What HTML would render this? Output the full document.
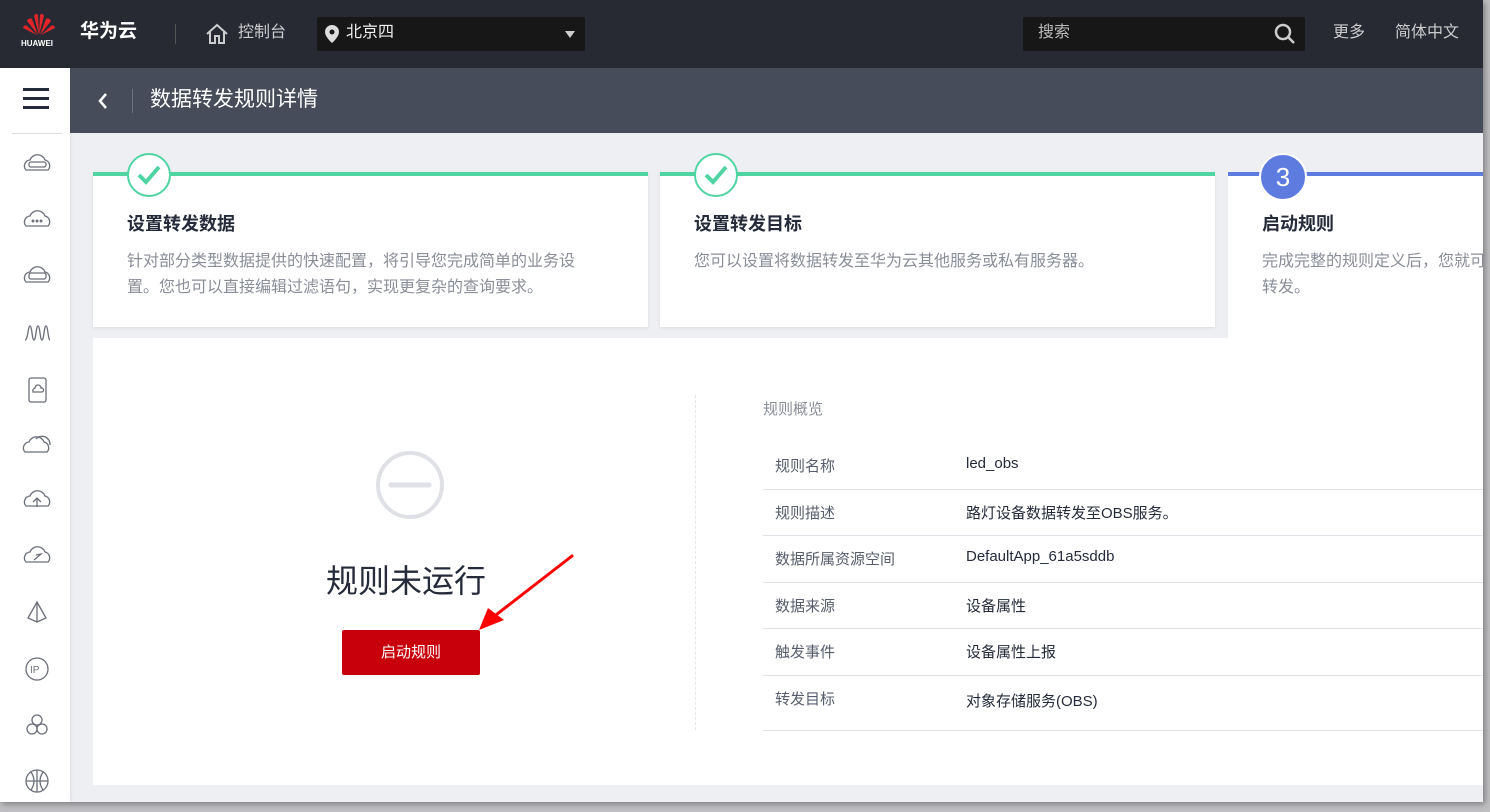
<!DOCTYPE html><html><head><meta charset="utf-8"><style>
*{margin:0;padding:0;box-sizing:border-box}
html,body{width:1490px;height:812px;overflow:hidden}
body{background:#bfbfc2;font-family:"Liberation Sans","Noto Sans CJK SC",sans-serif;position:relative;line-height:1.4}
.a{position:absolute}
.frame{left:0;top:0;width:1483px;height:802px;background:#eeeff3;overflow:hidden;box-shadow:2px 2px 6px rgba(0,0,0,.35)}
.top{left:0;top:0;width:1483px;height:68px;background:#272a33;color:#fff}
.sub{left:70px;top:68px;width:1413px;height:65px;background:#464c59}
.side{left:0;top:68px;width:70px;height:734px;background:#fff;box-shadow:1px 0 3px rgba(0,0,0,.08);overflow:hidden}
.card{background:#fff;top:172px;height:155px;box-shadow:0 1px 3px rgba(0,0,0,.08)}
.card h3{position:absolute;left:34px;top:36px;font-size:18px;color:#252b3a;font-weight:bold}
.card p{position:absolute;left:34px;top:73px;font-size:16px;line-height:26px;color:#8a8e99}
.chk{width:44px;height:44px;border-radius:50%;border:2px solid #50d4a2;background:#fff;top:-23px;left:34px}
.tbl div{position:absolute;left:763px;width:720px;height:1px;background:#dfe1e6}
.tl{position:absolute;left:775px;font-size:15px;color:#575d6c}
.tv{position:absolute;left:966px;font-size:15px;color:#252b3a}
</style></head><body>
<div class="a frame">
<div class="a top">
 <svg class="a" style="left:22px;top:12px" width="34" height="24" viewBox="0 0 34 24"><g fill="#e0262a"><path d="M17 23 L12 4 Q14 0 16 3Z"/><path d="M17 23 L22 4 Q20 0 18 3Z"/><path d="M16 23 L5 9 Q7 5 10 7Z"/><path d="M18 23 L29 9 Q27 5 24 7Z"/><path d="M15 23 L1 16 Q2 12 5 14Z"/><path d="M19 23 L33 16 Q32 12 29 14Z"/></g></svg>
 <div class="a" style="left:21px;top:38px;font-size:8px;font-weight:bold">HUAWEI</div>
 <div class="a" style="left:80px;top:19px;font-size:19px;font-weight:bold">华为云</div>
 <div class="a" style="left:175px;top:24px;width:1px;height:20px;background:#555"></div>
 <svg class="a" style="left:205px;top:22px" width="24" height="24" viewBox="0 0 24 24" fill="none" stroke="#ccc" stroke-width="2"><path d="M2 12 L12 3 L22 12 M5 10 V21 H10 V14 H14 V21 H19 V10"/></svg>
 <div class="a" style="left:238px;top:22px;font-size:16px;color:#ccc">控制台</div>
 <div class="a" style="left:317px;top:17px;width:268px;height:34px;background:#171717;border-radius:2px"></div>
 <svg class="a" style="left:325px;top:25px" width="14" height="18" viewBox="0 0 14 18"><path d="M7 0a7 7 0 0 1 7 7c0 5-7 11-7 11S0 12 0 7a7 7 0 0 1 7-7z" fill="#ddd"/><circle cx="7" cy="7" r="2.5" fill="#171717"/></svg>
 <div class="a" style="left:346px;top:22px;font-size:16px;color:#eee">北京四</div>
 <div class="a" style="left:565px;top:31px;width:0;height:0;border-left:5px solid transparent;border-right:5px solid transparent;border-top:7px solid #ccc"></div>
 <div class="a" style="left:1023px;top:17px;width:282px;height:34px;background:#171717;border-radius:2px"></div>
 <div class="a" style="left:1038px;top:22px;font-size:16px;color:#bbb">搜索</div>
 <svg class="a" style="left:1274px;top:23px" width="22" height="22" viewBox="0 0 22 22" fill="none" stroke="#ccc" stroke-width="2.5"><circle cx="9" cy="9" r="7"/><path d="M14 14 L20 20"/></svg>
 <div class="a" style="left:1333px;top:22px;font-size:16px;color:#ccc">更多</div>
 <div class="a" style="left:1395px;top:22px;font-size:16px;color:#ccc">简体中文</div>
</div>
<div class="a side">
 <div class="a" style="left:23px;top:20px;width:26px;height:3px;background:#252b3a;box-shadow:0 9px 0 #252b3a,0 18px 0 #252b3a"></div>
 <div class="a" style="left:12px;top:65px;width:50px;height:1px;background:#ddd"></div>
 <svg class="a" style="left:20px;top:80px" width="36" height="650" viewBox="0 0 36 650" fill="none" stroke="#6b6f7a" stroke-width="1.3">
  <g><path d="M6 22 a6 6 0 0 1 4-10 a8 8 0 0 1 15 0 a6 6 0 0 1 3 10Z"/><rect x="9" y="14" width="17" height="5" rx="2"/></g>
  <g transform="translate(0,56)"><path d="M6 22 a6 6 0 0 1 4-10 a8 8 0 0 1 15 0 a6 6 0 0 1 3 10Z"/><circle cx="13" cy="17" r=".8"/><circle cx="17" cy="17" r=".8"/><circle cx="21" cy="17" r=".8"/></g>
  <g transform="translate(0,112)"><path d="M6 22 a6 6 0 0 1 4-10 a8 8 0 0 1 15 0 a6 6 0 0 1 3 10Z"/><rect x="9" y="13" width="17" height="6" rx="2"/></g>
  <g transform="translate(0,168)"><path d="M5 24 C8 24 8 10 10 10 C12 10 12 24 14 24 C16 24 16 10 18 10 C20 10 20 24 22 24 C24 24 24 10 26 10 C28 10 28 24 30 24"/></g>
  <g transform="translate(0,224)"><rect x="9" y="6" width="17" height="24" rx="2"/><path d="M13 20 a3 3 0 0 1 2-4 a3 3 0 0 1 6 0 a2 2 0 0 1 1 4Z"/></g>
  <g transform="translate(0,280)"><path d="M5 24 a6 6 0 0 1 4-10 a8 8 0 0 1 15 0 a6 6 0 0 1 3 10Z"/><path d="M16 11 a8 8 0 0 1 14 6"/></g>
  <g transform="translate(0,336)"><path d="M6 22 a6 6 0 0 1 4-10 a8 8 0 0 1 15 0 a6 6 0 0 1 3 10Z"/><path d="M13 18 L17 14 L21 18 M17 14 V23"/></g>
  <g transform="translate(0,392)"><path d="M6 22 a6 6 0 0 1 4-10 a8 8 0 0 1 15 0 a6 6 0 0 1 3 10Z"/><path d="M14 20 L21 14 L16 15"/></g>
  <g transform="translate(0,448)"><path d="M17 6 L8 22 L17 26 L26 22Z M17 6 V26"/></g>
  <g transform="translate(0,504)"><circle cx="17" cy="17" r="11"/><text x="10" y="21" font-size="10" fill="#6b6f7a" stroke="none" font-family="Liberation Sans">IP</text></g>
  <g transform="translate(0,560)"><circle cx="17" cy="12" r="5"/><circle cx="12" cy="21" r="5"/><circle cx="22" cy="21" r="5"/></g>
  <g transform="translate(0,616)"><circle cx="17" cy="17" r="11"/><path d="M6 17 H28 M17 6 V28 M11 8 Q17 17 11 26 M23 8 Q17 17 23 26"/></g>
 </svg>
</div>
<div class="a sub">
 <svg class="a" style="left:27px;top:24px" width="12" height="18" viewBox="0 0 12 18" fill="none" stroke="#fff" stroke-width="2.5"><path d="M9 2 L3 9 L9 16"/></svg>
 <div class="a" style="left:62px;top:21px;width:1px;height:24px;background:#6b7180"></div>
 <div class="a" style="left:80px;top:17px;font-size:21px;color:#fff">数据转发规则详情</div>
</div>
<div class="a card" style="left:93px;width:555px;border-top:4px solid #50d4a2"><div class="a chk"><svg width="40" height="40" viewBox="0 0 40 40"><path d="M10 20 L17 27 L30 12" fill="none" stroke="#50d4a2" stroke-width="4"/></svg></div><h3>设置转发数据</h3><p>针对部分类型数据提供的快速配置，将引导您完成简单的业务设<br>置。您也可以直接编辑过滤语句，实现更复杂的查询要求。</p></div>
<div class="a card" style="left:660px;width:555px;border-top:4px solid #50d4a2"><div class="a chk"><svg width="40" height="40" viewBox="0 0 40 40"><path d="M10 20 L17 27 L30 12" fill="none" stroke="#50d4a2" stroke-width="4"/></svg></div><h3>设置转发目标</h3><p>您可以设置将数据转发至华为云其他服务或私有服务器。</p></div>
<div class="a card" style="left:1228px;width:255px;height:170px;border-top:4px solid #5e7ce0;box-shadow:none;overflow:visible"><div class="a" style="left:31px;top:-23px;width:48px;height:48px;border-radius:50%;background:#5e7ce0;border:2px solid #fff;color:#fff;font-size:26px;text-align:center;line-height:44px">3</div><h3>启动规则</h3><p style="white-space:nowrap;width:223px;overflow:hidden">完成完整的规则定义后，您就可<br>转发。</p></div>
<div class="a" style="left:93px;top:338px;width:1390px;height:447px;background:#fff"></div>
<svg class="a" style="left:375px;top:450px" width="70" height="70" viewBox="0 0 70 70"><circle cx="35" cy="35" r="32" fill="none" stroke="#dfe1e6" stroke-width="4"/><path d="M16 35 H54" stroke="#dfe1e6" stroke-width="5" stroke-linecap="round"/></svg>
<div class="a" style="left:326px;top:559px;font-size:32px;color:#252b3a">规则未运行</div>
<div class="a" style="left:342px;top:630px;width:138px;height:45px;background:#c7000b;border-radius:2px;color:#fff;font-size:15px;text-align:center;line-height:45px">启动规则</div>
<svg class="a" style="left:470px;top:550px" width="110" height="90" viewBox="0 0 110 90"><path d="M102 6 L22 68" stroke="#f00" stroke-width="3" stroke-linecap="round"/><path d="M9 80 L18 58 L34 70Z" fill="#f00"/></svg>
<div class="a" style="left:695px;top:395px;height:335px;border-left:1px dashed #e5e6ea"></div>
<div class="a" style="left:763px;top:399px;font-size:15px;color:#8a8e99">规则概览</div>
<div class="tbl"><div style="top:489px"></div><div style="top:535px"></div><div style="top:582px"></div><div style="top:628px"></div><div style="top:675px"></div><div style="top:730px"></div></div>
<div class="tl" style="top:456px">规则名称</div><div class="tv" style="top:453px">led_obs</div>
<div class="tl" style="top:503px">规则描述</div><div class="tv" style="top:503px">路灯设备数据转发至OBS服务。</div>
<div class="tl" style="top:549px">数据所属资源空间</div><div class="tv" style="top:546px">DefaultApp_61a5sddb</div>
<div class="tl" style="top:596px">数据来源</div><div class="tv" style="top:596px">设备属性</div>
<div class="tl" style="top:642px">触发事件</div><div class="tv" style="top:642px">设备属性上报</div>
<div class="tl" style="top:689px">转发目标</div><div class="tv" style="top:691px">对象存储服务(OBS)</div>
</div>
</body></html>
